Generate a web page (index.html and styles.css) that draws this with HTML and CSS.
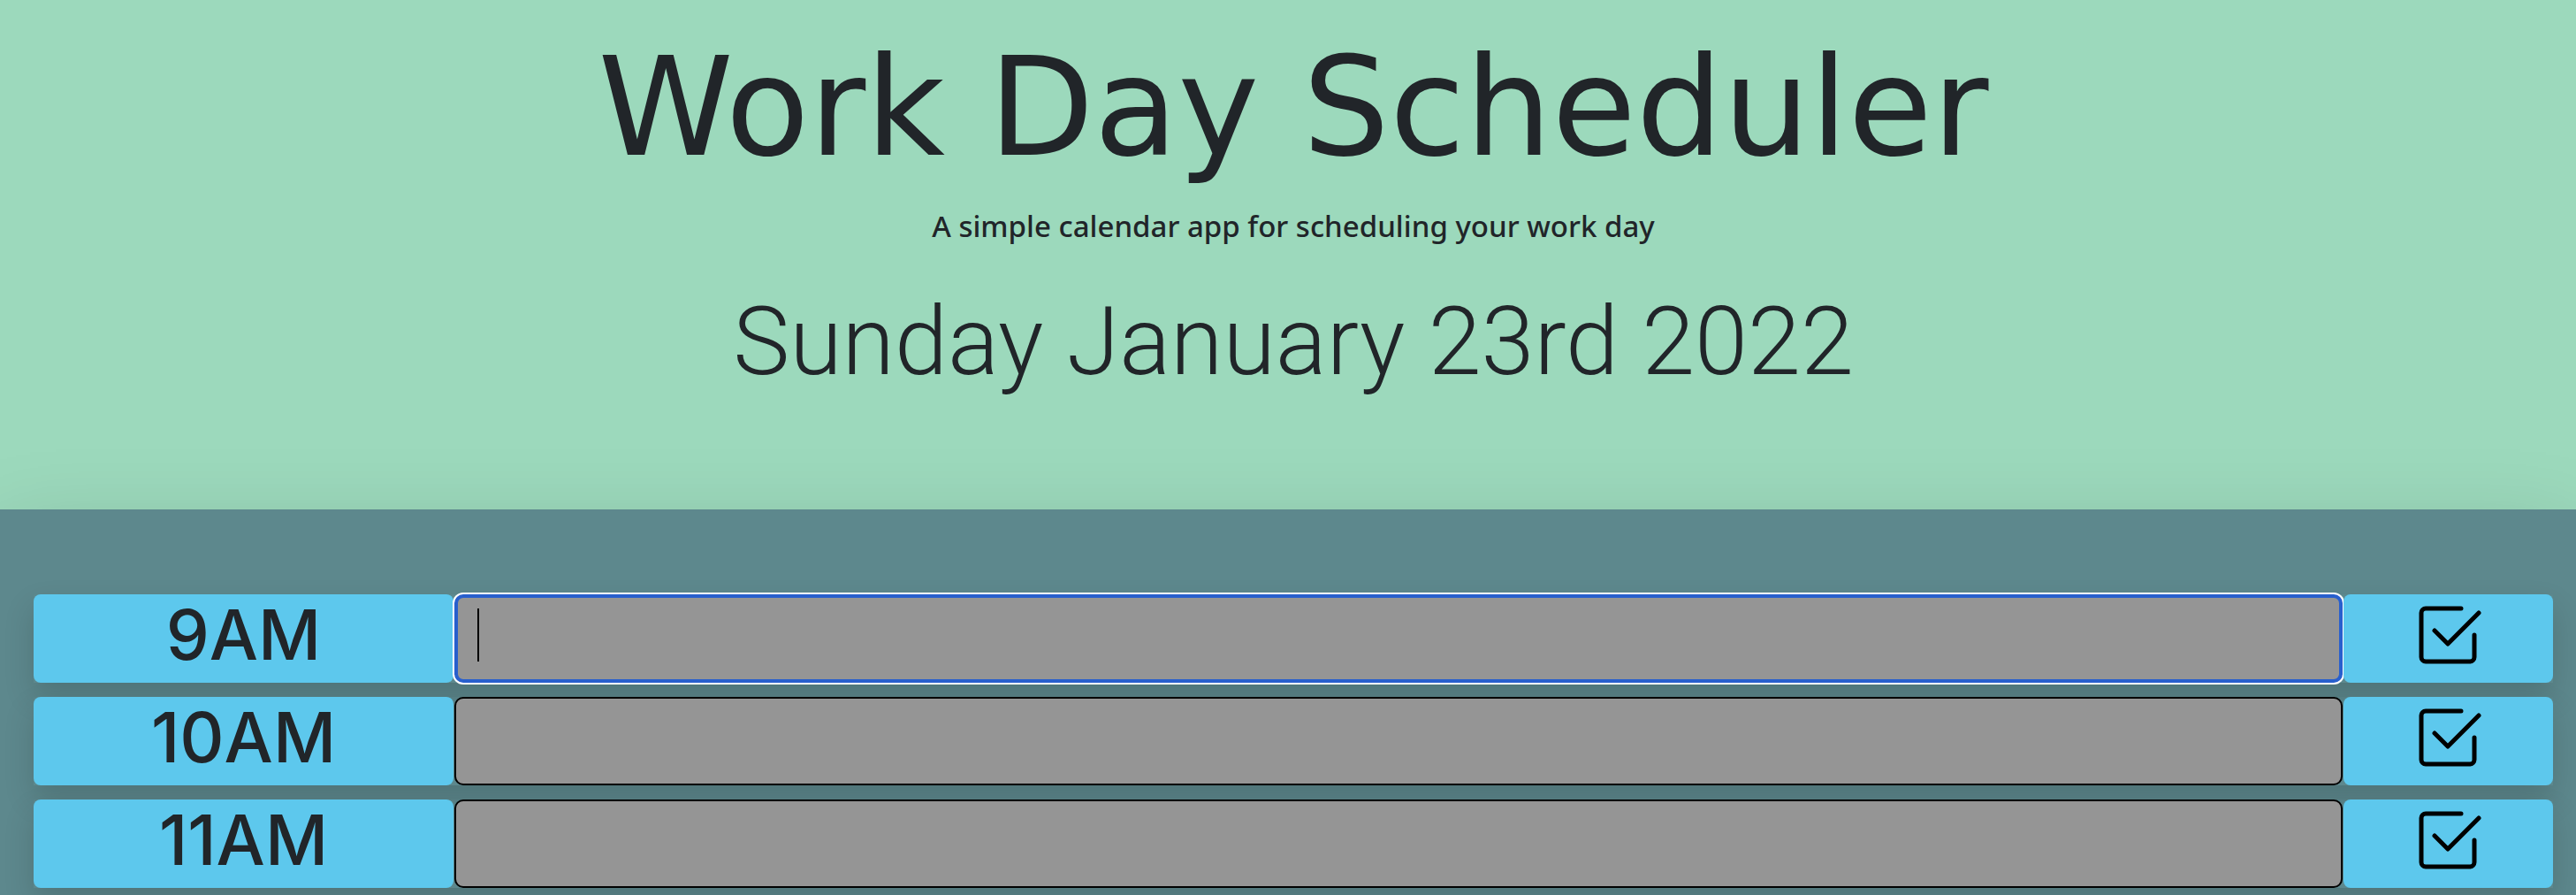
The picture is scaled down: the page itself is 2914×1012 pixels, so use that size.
FILE: index.html
```html
<!DOCTYPE html>
<html lang="en">
<head>
<meta charset="utf-8">
<meta name="viewport" content="width=device-width, initial-scale=1">
<title>Work Day Scheduler</title>
<link rel="stylesheet" href="styles.css">
</head>
<body>
<svg class="sprite" aria-hidden="true">
  <symbol id="check-square" viewBox="0 0 16 16">
    <path d="M3 14.5A1.5 1.5 0 0 1 1.5 13V3A1.5 1.5 0 0 1 3 1.5h8a.5.5 0 0 1 0 1H3a.5.5 0 0 0-.5.5v10a.5.5 0 0 0 .5.5h10a.5.5 0 0 0 .5-.5V8a.5.5 0 0 1 1 0v5a1.5 1.5 0 0 1-1.5 1.5H3z"/>
    <path d="m8.354 10.354 7-7a.5.5 0 0 0-.708-.708L8 9.293 5.354 6.646a.5.5 0 1 0-.708.708l3 3a.5.5 0 0 0 .708 0z"/>
  </symbol>
</svg>
<header class="header">
  <h1 class="title">Work Day Scheduler</h1>
  <p class="lead">A simple calendar app for scheduling your work day</p>
  <p class="date">Sunday January 23rd 2022</p>
</header>
<main class="schedule">
  <div class="row">
    <label class="hour" for="slot-9">9AM</label>
    <div class="slot">
      <textarea class="entry entry-active" id="slot-9"></textarea>
      <span class="caret"></span>
    </div>
    <button class="save" type="button" aria-label="Save 9AM"><svg class="icon"><use href="#check-square"/></svg></button>
  </div>
  <div class="row">
    <label class="hour" for="slot-10">10AM</label>
    <div class="slot">
      <textarea class="entry" id="slot-10"></textarea>
    </div>
    <button class="save" type="button" aria-label="Save 10AM"><svg class="icon"><use href="#check-square"/></svg></button>
  </div>
  <div class="row">
    <label class="hour" for="slot-11">11AM</label>
    <div class="slot">
      <textarea class="entry" id="slot-11"></textarea>
    </div>
    <button class="save" type="button" aria-label="Save 11AM"><svg class="icon"><use href="#check-square"/></svg></button>
  </div>
</main>
</body>
</html>
```
FILE: styles.css
```css
* {
  box-sizing: border-box;
}

body {
  margin: 0;
  background: #5d888d;
  color: #212529;
  font-family: "Noto Sans", sans-serif;
}

.sprite {
  display: none;
}

.header {
  padding: 24px 26px 124px 38px;
  background: #9cd9bc;
  text-align: center;
}

.title,
.lead,
.date {
  margin: 0;
}

.title {
  font-family: "DejaVu Sans", sans-serif;
  font-size: 155px;
  font-weight: 400;
  line-height: 196px;
}

.lead {
  margin-top: 16px;
  font-size: 33px;
  font-weight: 500;
  line-height: 40px;
}

.date {
  margin-top: 44px;
  font-family: Roboto, sans-serif;
  font-size: 108px;
  font-weight: 300;
  line-height: 132px;
}

.schedule {
  display: flex;
  flex-direction: column;
  gap: 16px;
  padding: 96px 26px 8px 38px;
  box-shadow: 0 32px 96px rgba(0, 0, 0, 0.175);
}

.row {
  display: grid;
  grid-template-columns: 2fr 9fr 1fr;
  grid-template-rows: 100px;
  box-shadow: 0 16px 32px rgba(0, 0, 0, 0.15);
}

.hour,
.save {
  border: 0;
  border-radius: 8px;
  background: #5dc8ed;
}

.hour {
  font-family: Inter, sans-serif;
  font-size: 78px;
  font-weight: 500;
  line-height: 92px;
  text-align: center;
}

.slot {
  position: relative;
  padding: 0 1px;
}

.entry {
  display: block;
  width: 100%;
  height: 100%;
  padding: 12px 24px;
  border: 2px solid #000;
  border-radius: 10px;
  outline: 0;
  background: #959595;
  color: #212529;
  font-family: inherit;
  font-size: 40px;
  line-height: 60px;
  resize: none;
}

.entry-active {
  border: 4px solid #285fcd;
  box-shadow: 0 0 0 2px #fff;
}

.caret {
  position: absolute;
  top: 16px;
  left: 27px;
  width: 2px;
  height: 60px;
  background: #000;
}

.save {
  position: relative;
  display: flex;
  align-items: flex-start;
  justify-content: center;
  padding: 6px 0;
  cursor: pointer;
}

.icon {
  width: 80px;
  height: 80px;
  fill: #000;
}
```
